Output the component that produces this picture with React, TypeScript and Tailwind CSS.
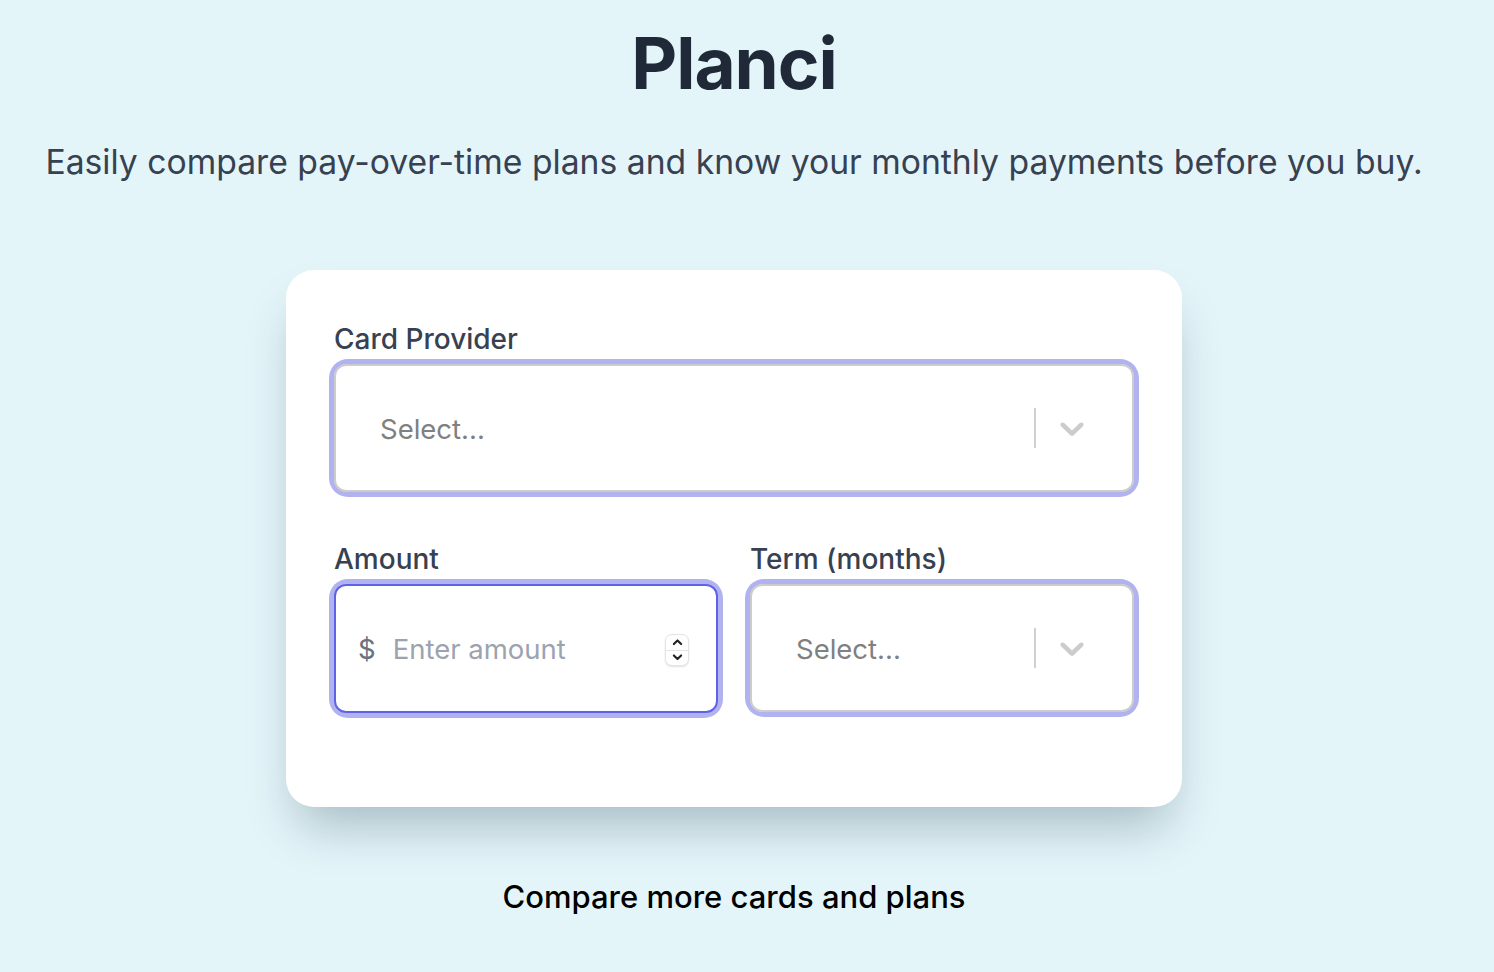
import { ChevronDown, ChevronUp } from "lucide-react"

function Chevron() {
  return (
    <svg viewBox="0 0 20 20" className="h-[40px] w-[40px]" fill="#cccccc" aria-hidden="true">
      <path d="M4.516 7.548c0.436-0.446 1.043-0.481 1.576 0l3.908 3.747 3.908-3.747c0.533-0.481 1.141-0.446 1.574 0 0.436 0.445 0.408 1.197 0 1.615-0.406 0.418-4.695 4.502-4.695 4.502-0.217 0.223-0.502 0.335-0.787 0.335s-0.57-0.112-0.789-0.335c0 0-4.287-4.084-4.695-4.502s-0.436-1.17 0-1.615z" />
    </svg>
  )
}

function SelectBox({ placeholder }: { placeholder: string }) {
  return (
    <div className="rounded-[14px] ring-[5px] ring-[#b1b3f1]">
      <div className="flex h-[128px] items-center rounded-[12px] border-2 border-[#cccccc] bg-white pl-[44px]">
        <span className="flex-1 pt-[3px] text-[27.5px] text-[#808080]">{placeholder}</span>
        <span className="h-[40px] w-[2px] bg-[#d0d0d0]" />
        <span className="flex items-center pl-[16px] pr-[40px]">
          <Chevron />
        </span>
      </div>
    </div>
  )
}

export default function App() {
  return (
    <div
      className="min-h-screen bg-[#e4f5fa] text-[#1f2937]"
      style={{ fontFamily: "Inter, 'Noto Sans', sans-serif" }}
    >
      <div className="flex w-[1468px] flex-col items-center pt-[18px]">
        <h1 className="text-[71px] font-bold leading-[90px] tracking-[-1px] text-[#1f2937]">Planci</h1>
        <p className="mt-[34px] text-[33.7px] leading-[40px] text-[#374151]">
          Easily compare pay-over-time plans and know your monthly payments before you buy.
        </p>

        <div className="mt-[88px] w-[896px] rounded-[28px] bg-white px-12 pb-[94px] pt-[51px] shadow-[0_30px_50px_-12px_rgba(0,40,50,0.28)]">
          <label className="block text-[28px] font-medium leading-[36px] text-[#374151]">Card Provider</label>
          <div className="mt-[7px]">
            <SelectBox placeholder="Select..." />
          </div>

          <div className="mt-[49px] grid grid-cols-2 gap-8">
            <div>
              <label className="block text-[28px] font-medium leading-[36px] text-[#374151]">Amount</label>
              <div className="mt-[7px] rounded-[14px] ring-[5px] ring-[#b1b3f1]">
                <div className="flex h-[129px] items-center rounded-[12px] border-2 border-[#5f62e6] bg-white pl-[22px] pr-[27px]">
                  <span className="pt-[3px] text-[27.5px] text-[#6b7280]">$</span>
                  <span className="ml-[17px] flex-1 pt-[3px] text-[27.5px] text-[#9ca3af]">Enter amount</span>
                  <span className="mt-[3px] flex h-[32px] w-[24px] flex-col items-center justify-center rounded-[7px] border border-[#e5e5e5] bg-white shadow-[0_1px_2px_rgba(0,0,0,0.12)]">
                    <ChevronUp className="h-[15px] w-[15px] text-[#222]" strokeWidth={3.5} />
                    <span className="h-px w-full bg-[#e5e5e5]" />
                    <ChevronDown className="h-[15px] w-[15px] text-[#222]" strokeWidth={3.5} />
                  </span>
                </div>
              </div>
            </div>
            <div>
              <label className="block text-[28px] font-medium leading-[36px] text-[#374151]">Term (months)</label>
              <div className="mt-[7px]">
                <SelectBox placeholder="Select..." />
              </div>
            </div>
          </div>
        </div>

        <a className="mt-[70px] text-[31px] font-medium leading-[40px] text-black">Compare more cards and plans</a>
      </div>
    </div>
  )
}
